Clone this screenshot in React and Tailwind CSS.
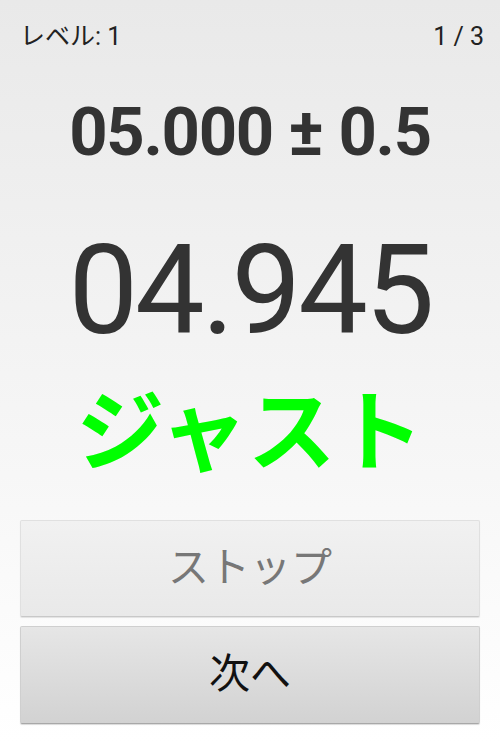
import React from "react";

const App = () => {
    return (
        <div
            className="flex flex-col h-[743px] w-[500px] bg-gradient-to-b from-[#e9e9e9] to-[#ffffff] text-[#333333]"
            style={{ fontFamily: "Roboto, 'Noto Sans CJK JP', sans-serif" }}
        >
            <div className="flex justify-between px-5 pt-[22px] text-[25px] leading-[30px] text-[#222222]">
                <span>レベル: 1</span>
                <span className="mr-[-4px]">1 / 3</span>
            </div>

            <div className="mt-[45px] text-center text-[67px] font-bold leading-[70px] tracking-[-1.3px]">
                05.000 ± 0.5
            </div>

            <div className="mt-[59px] text-center text-[124px] leading-[130px] tracking-[-3px]">
                04.945
            </div>

            <div className="mt-[22px] text-center text-[88px] font-bold leading-[110px] text-[#00ff00]">
                ジャスト
            </div>

            <div className="flex flex-col gap-[9px] px-5 mt-auto mb-[19px]">
                <button className="h-[97px] rounded-[2px] border border-[#e0e0e0] border-b-[#c8c8c8] bg-gradient-to-b from-[#f1f1f1] to-[#e9e9e9] text-[41px] text-[#777777] shadow-[0_1px_1px_rgba(0,0,0,0.1)]">
                    ストップ
                </button>
                <button className="h-[98px] rounded-[2px] border border-[#cfcfcf] border-b-[#a8a8a8] bg-gradient-to-b from-[#e6e6e6] to-[#d2d2d2] text-[41px] text-[#111111] shadow-[0_1px_1px_rgba(0,0,0,0.15)]">
                    次へ
                </button>
            </div>
        </div>
    );
};

export default App;
